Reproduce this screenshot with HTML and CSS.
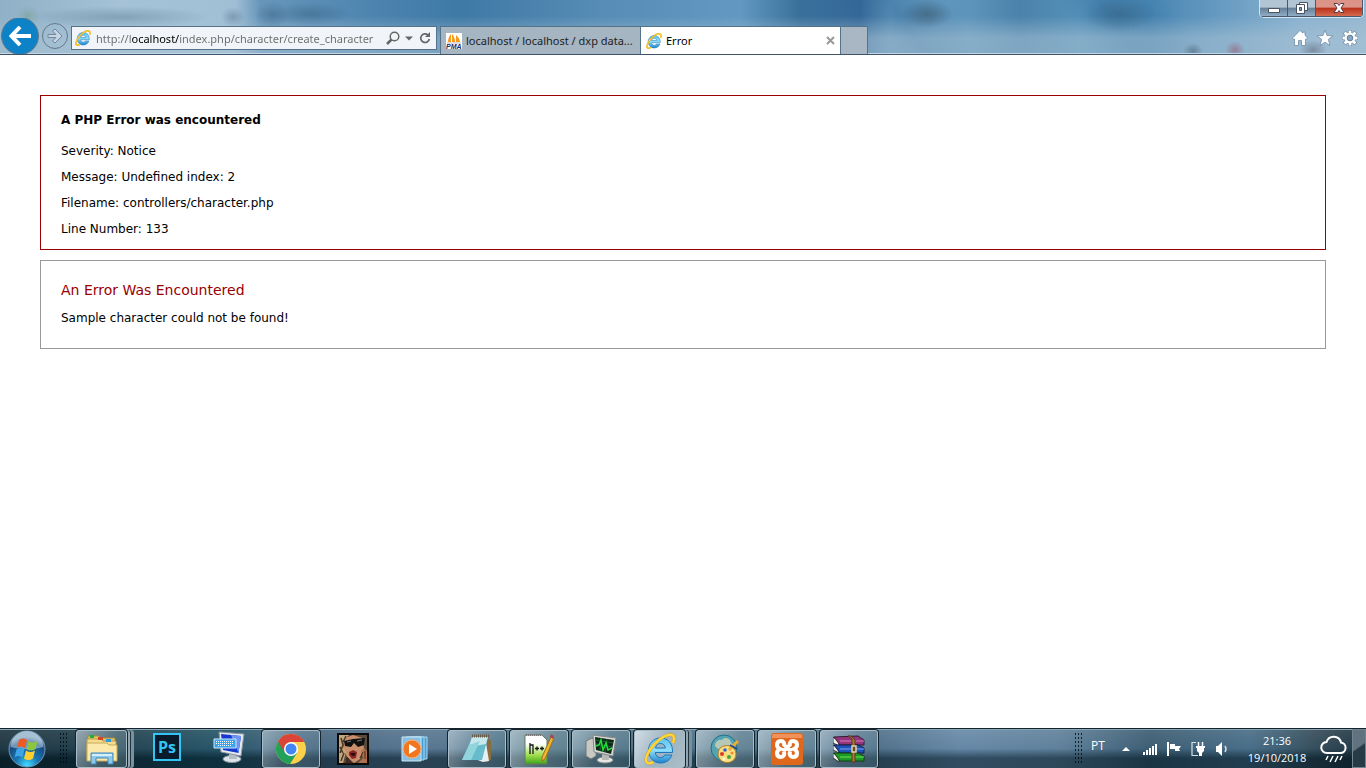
FILE: index.html
```
<!DOCTYPE html>
<html lang="en">
<head>
  <meta charset="UTF-8">
  <meta name="viewport" content="width=device-width, initial-scale=1.0">
  <title>Error</title>
  <link rel="stylesheet" href="styles.css">
</head>
<body>

  <!-- Shared icons -->
  <svg class="icon-defs" aria-hidden="true">
    <defs>
      <linearGradient id="ieBlue" x1="0" y1="0" x2="0" y2="1">
        <stop offset="0" stop-color="#5cc3f0"/>
        <stop offset="0.5" stop-color="#8ddcf8"/>
        <stop offset="1" stop-color="#1c82cc"/>
      </linearGradient>
    </defs>
    <symbol id="ie" viewBox="0 0 32 32">
      <path d="M16.500 5C9.500 5 4.500 10.500 4.500 17.500S9.500 30 16.500 30c5.500 0 9.800-3 11.300-8h-7c-.9 1.700-2.300 2.500-4.300 2.500-3 0-5-1.900-5.200-5h17.200C29 11 24.500 5 16.500 5zm-5 10c.5-2.800 2.400-4.500 5-4.500s4.500 1.700 4.900 4.500z" fill="url(#ieBlue)" stroke="#1b77bb" stroke-width="1"/>
      <path d="M29 10c1.500-4 1.500-7-1-8-4-1.500-12 3-18 9.500S.500 26 2.500 29c1.200 1.800 4 1.500 7 0" fill="none" stroke="#e2a314" stroke-width="3"/>
      <path d="M29 10c1.500-4 1.500-7-1-8-4-1.500-12 3-18 9.500S.500 26 2.500 29c1.200 1.800 4 1.500 7 0" fill="none" stroke="#ffd83a" stroke-width="2"/>
    </symbol>
  </svg>

  <!-- Browser chrome -->
  <header class="browser-bar">
    <div class="nav-buttons">
      <button class="back" aria-label="Back">
        <svg width="22" height="20" viewBox="0 0 22 20"><path d="M11 1L2.500 10l8.500 9M3 10h19" fill="none" stroke="#fff" stroke-width="4"/></svg>
      </button>
      <button class="forward" aria-label="Forward">
        <svg width="18" height="18" viewBox="0 0 18 18"><path d="M2 7.500h8L6.500 4 9 2l7 7-7 7-2.500-2 3.500-3.500H2z" fill="#c5d6e6" stroke="#75889b"/></svg>
      </button>
    </div>

    <form class="address-bar">
      <svg width="16" height="16"><use href="#ie"/></svg>
      <input type="text" aria-label="Address" value="http://localhost/index.php/character/create_character">
      <button type="button" aria-label="Search">
        <svg width="14" height="14" viewBox="0 0 14 14"><circle cx="8.500" cy="5.500" r="4.300" fill="none" stroke="#666" stroke-width="1.500"/><path d="M5.500 8.500L1 13" stroke="#666" stroke-width="2.500"/></svg>
      </button>
      <button type="button" aria-label="Show history">
        <svg width="8" height="14" viewBox="0 0 8 14"><path d="M0 5.500h8L4 9.500z" fill="#666"/></svg>
      </button>
      <button type="button" aria-label="Refresh">
        <svg width="14" height="14" viewBox="0 0 14 14"><path d="M10 4A4.300 4.300 0 1 0 11.300 8" fill="none" stroke="#666" stroke-width="1.700"/><path d="M12 1v5H7z" fill="#666"/></svg>
      </button>
    </form>

    <nav class="tabs">
      <a class="tab" href="#">
        <svg width="16" height="16" viewBox="0 0 16 16"><path fill="#fff" d="M0 0h16v16H0z"/><path d="M5 1v8H2c0-3 1-6 3-8zM6 1c2 2 3 5 3 8H6zM10 2c2 2 4 4 4 7h-4z" fill="#f79a1c"/><path d="M1 10h14" stroke="#b8b8c8"/><text x="0" y="16" class="pma-label">PMA</text></svg>
        <span>localhost / localhost / dxp data...</span>
      </a>
      <div class="tab active">
        <svg width="16" height="16"><use href="#ie"/></svg>
        <span>Error</span>
        <button aria-label="Close tab"><svg width="9" height="9" viewBox="0 0 9 9"><path d="M1 1l7 7M8 1L1 8" stroke="#999" stroke-width="2"/></svg></button>
      </div>
      <button class="new-tab" aria-label="New tab"></button>
    </nav>

    <div class="bar-right">
      <div class="window-controls">
        <button aria-label="Minimize"><svg width="14" height="14" viewBox="0 0 14 14"><path d="M1.500 7.500h11v4h-11z" fill="#fff" stroke="#4a5360"/></svg></button>
        <button aria-label="Restore"><svg width="14" height="14" viewBox="0 0 14 14"><path d="M4.500 1.500h8v8h-8z" fill="#fff" stroke="#4a5360"/><path d="M1.500 3.500h8v9h-8z" fill="#fff" stroke="#4a5360"/><path d="M4.500 6.500h2v3h-2z" fill="#7ea0bb" stroke="#4a5360"/></svg></button>
        <button class="close" aria-label="Close"><svg width="14" height="14" viewBox="0 0 14 14"><path d="M2 2.500h3.500L7 4.500l1.500-2H12L9 7l3 4.500H8.500L7 9.500l-1.500 2H2L5 7z" fill="#fff" stroke="#5b3a42"/></svg></button>
      </div>
      <div class="tools">
        <button aria-label="Home"><svg width="16" height="16" viewBox="0 0 16 16"><path d="M8 .500L.500 8l1 1.500 1-.5v6.500h4v-5h3v5h4V9l1 .5 1-1.500L13 5V2h-2v1z" fill="#fff" stroke="#66819b" stroke-width="0.700"/></svg></button>
        <button aria-label="Favorites"><svg width="16" height="16" viewBox="0 0 16 16"><path d="M8 0l2 5.600 6 .2-4.700 3.600 1.700 6.100L8 12.200l-5 3.300 1.700-6.100L0 5.800l6-.2z" fill="#fff" stroke="#66819b" stroke-width="0.700"/></svg></button>
        <button aria-label="Tools"><svg width="16" height="16" viewBox="0 0 16 16"><path d="M8 0v16M0 8h16M2.200 2.200l11.600 11.600M13.800 2.200L2.200 13.800" stroke="#66819b" stroke-width="4"/><path d="M8 .500v15M.500 8h15M2.600 2.600l10.800 10.800M13.400 2.600L2.600 13.400" stroke="#fff" stroke-width="2.800"/><circle cx="8" cy="8" r="4.200" fill="#86a8c4" stroke="#fff" stroke-width="2.200"/><circle cx="8" cy="8" r="2.800" fill="#86a8c4" stroke="#66819b"/></svg></button>
      </div>
    </div>
  </header>

  <!-- Page content -->
  <main>
    <section class="php-error">
      <h4>A PHP Error was encountered</h4>
      <p>Severity: Notice</p>
      <p>Message: Undefined index: 2</p>
      <p>Filename: controllers/character.php</p>
      <p>Line Number: 133</p>
    </section>

    <section class="content">
      <h1>An Error Was Encountered</h1>
      <p>Sample character could not be found!</p>
    </section>
  </main>

  <!-- Taskbar -->
  <footer class="taskbar">
    <button class="start" aria-label="Start">
      <svg width="38" height="38" viewBox="0 0 38 38">
        <defs>
          <radialGradient id="orb" cx="0.5" cy="0.95" r="0.8">
            <stop offset="0" stop-color="#45dcff"/>
            <stop offset="0.400" stop-color="#1976b4"/>
            <stop offset="0.800" stop-color="#174b80"/>
            <stop offset="1" stop-color="#7f9db8"/>
          </radialGradient>
        </defs>
        <circle cx="19" cy="19" r="18" fill="url(#orb)" stroke="#6f95b5" stroke-width="1"/>
        <path d="M3 17a16 16 0 0 1 32 0c-10 3-22 3-32 0z" fill="#dcecf7" opacity="0.450"/>
        <path d="M11 10c3-2 5-2 8 0l-2 8c-3-2-5-2-8 0z" fill="#ee5a24"/>
        <path d="M20.500 11c3 2 6 2 9 0l-2 8c-3 2-6 2-9 0z" fill="#8cc63f"/>
        <path d="M8.500 19.500c3-2 5-2 8 0l-2 8c-3-2-5-2-8 0z" fill="#3da4e8"/>
        <path d="M18 20.500c3 2 6 2 9 0l-2 8c-3 2-6 2-9 0z" fill="#ffcf2e"/>
      </svg>
    </button>
    <span class="grip"></span>

    <div class="apps">
      <button class="app open stacked light" aria-label="Windows Explorer">
        <svg width="34" height="32" viewBox="0 0 34 32">
          <path d="M3 3h11l2 2h14v21H3z" fill="#e9c766" stroke="#a98a3d"/>
          <path d="M2 6h14l2 2h13v19H2z" fill="#f6dc8c" stroke="#b8974a"/>
          <path d="M2 10h20l2 2h8v16H2z" fill="#fbe9ac" stroke="#c7a85b"/>
          <path d="M5 2h4v3H5z" fill="#20b038"/><path d="M13 4h5v3h-5z" fill="#d64527"/><path d="M21 6h5v3h-5z" fill="#2b9be0"/>
          <path d="M6 31V20h22v11h-5v-6H11v6z" fill="#8cc9ec" stroke="#3f87b8"/>
          <path d="M7 21h20v2H7z" fill="#d5effb"/>
        </svg>
      </button>
      <button class="app" aria-label="Photoshop">
        <svg class="raised" width="28" height="28" viewBox="0 0 28 28"><path d="M1 1h26v26H1z" fill="#0a1c2b" stroke="#31c5f4" stroke-width="2"/><text x="5" y="20" class="ps-label">Ps</text></svg>
      </button>
      <button class="app" aria-label="On-screen keyboard">
        <svg class="raised" width="32" height="32" viewBox="0 0 32 32">
          <ellipse cx="19" cy="28" rx="9" ry="3.500" fill="#dfe4e9" stroke="#8c98a3"/>
          <path d="M16 22l7 1 1 5h-8z" fill="#b5bec7"/>
          <path d="M6 1l25 2-3 22-20-4z" fill="#e6e9ee" stroke="#8894a0"/>
          <path d="M8 3l20 2-2.500 17L10 19z" fill="#1537d2"/><path d="M18 4l10 1-2.500 17z" fill="#6d93f3"/>
          <path d="M1 8h22v9H1z" fill="#3ba5ea" stroke="#d2e9f8"/>
          <path d="M3 10.500h18M3 12.500h18M5 14.500h14" stroke="#fff" stroke-dasharray="1 1"/>
        </svg>
      </button>
      <button class="app open" aria-label="Google Chrome">
        <svg width="30" height="30" viewBox="0 0 30 30">
          <circle cx="15" cy="15" r="15" fill="#fbd14b"/>
          <path d="M15 15L2 7.500A15 15 0 0 0 14 30l7-11z" fill="#23a15a"/>
          <path d="M2 7.500A15 15 0 0 1 28.200 8H15l-6.500 10z" fill="#db4437"/>
          <circle cx="15" cy="15" r="7" fill="#fff"/><circle cx="15" cy="15" r="5.500" fill="#4285f4"/>
        </svg>
      </button>
      <button class="app" aria-label="GTA San Andreas">
        <svg width="32" height="32" viewBox="0 0 32 32">
          <path d="M0 0h32v32H0z" fill="#0c0a09"/>
          <path d="M2 2h28v28H2z" fill="#5a4a3c"/>
          <path d="M8 5l8-3 9 3 2 10-4 11-6 4-7-6-4-9z" fill="#c98f6c"/>
          <path d="M2 2h10L7 7l-1 7 3 5-3 11H2z" fill="#c0a87c"/>
          <path d="M4 5l2 7-3 8M9 3L6 9M7 20l-3 8M3 14l3 6" fill="none" stroke="#4c3828" stroke-width="1.500"/>
          <path d="M7 8l9-2 12-1-1 7-6 2-4-4-3 4-6-1z" fill="#111"/>
          <path d="M10 9l4-1M20 8l5-1" stroke="#777"/>
          <path d="M12 19l4-2 4 2-1 6-4 1-3-4z" fill="#8c2525"/><path d="M13.500 20h5l-1 3-3-.5z" fill="#2a0c0d"/>
          <path d="M24 18l3-3 3 3v12h-9l5-5z" fill="#b06f4c"/><path d="M23 25l3-6M28 18v8M10 24l5 6H9z" stroke="#402820" fill="#402820"/>
        </svg>
      </button>
      <button class="app" aria-label="Media Player">
        <svg width="28" height="26" viewBox="0 0 28 26">
          <path d="M8 1h18v22H8z" fill="#4a9ed4" stroke="#a9daf2"/><path d="M5 1h18v23H5z" fill="#4a9ed4" stroke="#a9daf2"/><path d="M1 1h19v24H1z" fill="#89bfe0" stroke="#c9e8f7"/>
          <circle cx="11" cy="13" r="9" fill="#f0761f" stroke="#f9b27a"/><path d="M8 8l8 5-8 5z" fill="#fff"/>
        </svg>
      </button>
      <button class="app open" aria-label="Notepad">
        <svg width="32" height="32" viewBox="0 0 32 32">
          <path d="M26 4l4 4v19l-5 2z" fill="#876d40"/><path d="M24 4l4 24-6 1-8-3z" fill="#e7eef2"/>
          <path d="M11 4h16l-6 23H1z" fill="#67bccb"/><path d="M11 4h16l-2 7-17 3z" fill="#c7e9ed"/><path d="M8 12l11-4-9 19H1z" fill="#91d4dc"/>
          <path d="M11 3h17" stroke="#685c49" stroke-width="3" stroke-dasharray="1 1"/>
        </svg>
      </button>
      <button class="app open light" aria-label="Notepad++">
        <svg width="32" height="32" viewBox="0 0 32 32">
          <defs><linearGradient id="npp" x1="0" y1="0" x2="0" y2="1"><stop offset="0.300" stop-color="#fff"/><stop offset="0.700" stop-color="#9edc4b"/><stop offset="1" stop-color="#3ea51a"/></linearGradient></defs>
          <path d="M2 2h17l5 5v24H2z" fill="url(#npp)" stroke="#657a5d"/>
          <path d="M3 2h16" stroke="#777" stroke-width="2" stroke-dasharray="1 1"/>
          <path d="M7 21V10M7 12h3v9M12 15.500h4M14 13.500v4M17 15.500h4M19 13.500v4" fill="none" stroke="#161616" stroke-width="1.300"/>
          <path d="M28 4l3 1-9 21-3 2v-4z" fill="#f1b52d" stroke="#9d701d"/><path d="M28 1l3 2-1 3-3-2z" fill="#a6474d"/>
        </svg>
      </button>
      <button class="app open" aria-label="Task Manager">
        <svg width="32" height="30" viewBox="0 0 32 30">
          <path d="M1 7l6-3 4 2v16l-5 3-5-3z" fill="#c7c9c5" stroke="#777"/>
          <ellipse cx="20" cy="26" rx="8" ry="3" fill="#e5e7e4" stroke="#8a8e8c"/><path d="M17 20l7 1v5h-7z" fill="#b6bab7"/>
          <path d="M8 1l23 3-3 18-19-4z" fill="#d5d8d4" stroke="#858985"/><path d="M10 3l19 3-3 14-15-4z" fill="#102917"/>
          <path d="M11 6l17 3M11 10l16 3M16 4l-1 13M22 5l-2 13" stroke="#17632c"/>
          <path d="M11 12l3-1 2-5 2 10 3-7 2 7 4-2" fill="none" stroke="#22e03c" stroke-width="1.500"/>
        </svg>
      </button>
      <button class="app open stacked current" aria-label="Internet Explorer">
        <svg width="32" height="32"><use href="#ie"/></svg>
      </button>
      <button class="app open light" aria-label="Paint">
        <svg width="30" height="32" viewBox="0 0 30 32">
          <circle cx="14" cy="15" r="13" fill="#55a2b1" stroke="#1b728b"/><path d="M5 13c0-5 4-7 7-6 3-4 9-1 9 3 3 1 2 6-2 6H8z" fill="#b6c9b9"/>
          <path d="M10 15c6-5 16-2 16 6 0 7-7 10-12 8-7-2-7-10-4-14z" fill="#f8dd82" stroke="#a87b27"/>
          <circle cx="12" cy="21" r="2" fill="#d93c2a"/><circle cx="15" cy="17" r="1.800" fill="#345fca"/><circle cx="19" cy="24" r="2" fill="#41a83c"/><circle cx="22" cy="20" r="1.500" fill="#f48c27"/><circle cx="14" cy="26" r="1.700" fill="#fff5cb"/>
          <path d="M19 17l9-9" stroke="#efad30" stroke-width="3"/><path d="M20 12l7 4" stroke="#214c91" stroke-width="2"/>
        </svg>
      </button>
      <button class="app open light" aria-label="XAMPP">
        <svg width="32" height="32" viewBox="0 0 32 32">
          <rect width="32" height="32" rx="3" fill="#e0681d"/><path d="M1 3q0-2 2-2h26q2 0 2 2v2H1z" fill="#f0925a"/>
          <path d="M13 13.500C14 10 12.500 8 10 8c-3 0-4 2-4 4s1 3 3 4c-2 1-3 2-3 4s1 4 4 4c2.500 0 4-2 3-5.500M19 13.500C18 10 19.500 8 22 8c3 0 4 2 4 4s-1 3-3 4c2 1 3 2 3 4s-1 4-4 4c-2.500 0-4-2-3-5.500" fill="none" stroke="#fff" stroke-width="4"/>
          <path d="M11 16.500c2 1 3.500-.5 5-.5s3 1.500 5 .5M13 12c1 2 5 2 6 0" fill="none" stroke="#fff" stroke-width="3.500"/>
        </svg>
      </button>
      <button class="app open" aria-label="WinRAR">
        <svg width="32" height="28" viewBox="0 0 32 28">
          <path d="M0 2l6 4v5L0 8zM0 10l6 3v5l-6-3zM0 18l6 3v6l-6-4z" fill="#f0eee5" stroke="#303036"/>
          <path d="M1 2l24-1 6 4v5H7z" fill="#95357d" stroke="#351b35"/><path d="M7 6h24" stroke="#cd82b8"/>
          <path d="M1 10h24l6 3v5H7z" fill="#2053b9" stroke="#101f4a"/><path d="M7 14h24" stroke="#74a7f1"/>
          <path d="M1 18h24l6 3v5H7z" fill="#1d9a25" stroke="#103d14"/><path d="M7 22h24" stroke="#71df55"/>
          <path d="M15 1l4 3v23h3V5l-4-4z" fill="#a97836" stroke="#583a1a"/><path d="M19 11h4v6h-4z" fill="#6d4a22" stroke="#e2d5a4" stroke-width="1.500"/>
        </svg>
      </button>
    </div>

    <div class="tray">
      <span class="grip"></span>
      <button class="language">PT</button>
      <button class="tray-icon" aria-label="Show hidden icons"><svg width="8" height="8" viewBox="0 0 8 8"><path d="M0 6l4-4 4 4z" fill="#fff"/></svg></button>
      <button class="tray-icon" aria-label="Network"><svg width="16" height="16" viewBox="0 0 16 16"><path d="M2 11v3M5 9v5M8 7v7M11 5v9M14 3v11" stroke="#fff" stroke-width="2"/></svg></button>
      <button class="tray-icon" aria-label="Action Center"><svg width="16" height="16" viewBox="0 0 16 16"><path d="M2 1v14" stroke="#fff" stroke-width="2"/><path d="M4 3h5v2h6l-2 3 1 2H9V8H4z" fill="#fff"/></svg></button>
      <button class="tray-icon" aria-label="Power"><svg width="16" height="16" viewBox="0 0 16 16"><path d="M6 1.500H2v13h6" fill="none" stroke="#d8dfe3" stroke-width="1.200"/><path d="M8.500 1v4M12.500 1v4" stroke="#fff" stroke-width="1.500"/><path d="M6 5h9v2h-1v3l-2 2v3H9v-3l-2-2V7H6z" fill="#fff"/></svg></button>
      <button class="tray-icon" aria-label="Volume"><svg width="16" height="16" viewBox="0 0 16 16"><path d="M2 5h2l4-4v14l-4-4H2z" fill="#fff"/><path d="M11 5q2 3 0 6" fill="none" stroke="#d4dde3" stroke-width="1.500"/></svg></button>
      <button class="clock"><time>21:36</time><span>19/10/2018</span></button>
      <button class="weather" aria-label="Weather"><svg width="28" height="28" viewBox="0 0 28 28"><path d="M7 18a5.500 5.500 0 0 1-.5-11A7.500 7.500 0 0 1 21 7.500 5.300 5.300 0 0 1 21 18z" fill="none" stroke="#fff" stroke-width="2"/><path d="M8 21l-2 4M13 21l-3 6M18 21l-3 6M22 21l-2 4" stroke="#fff" stroke-width="1.500"/></svg></button>
      <button class="show-desktop" aria-label="Show desktop"></button>
    </div>
  </footer>

</body>
</html>
```
FILE: styles.css
```
/* General Reset */
* {
  margin: 0;
  padding: 0;
  box-sizing: border-box;
}

body {
  min-height: 100vh;
  display: flex;
  flex-direction: column;
  background-color: #fff;
  color: #000;
  font-family: Verdana, "DejaVu Sans", sans-serif;
  font-size: 12px;
}

button,
input {
  border: none;
  background: none;
  font-family: "Segoe UI", "Open Sans", sans-serif;
  font-size: 12px;
}

svg {
  display: block;
  flex: none;
}

.icon-defs {
  position: absolute;
  width: 0;
  height: 0;
}

/* Browser bar */
.browser-bar {
  height: 55px;
  display: flex;
  align-items: flex-end;
  border-bottom: 1px solid #3f5468;
  box-shadow: inset 0 -1px #c3d6e6;
  background:
    radial-gradient(ellipse 12px 10px at 28px 16px, rgba(100, 150, 110, 0.35), transparent),
    radial-gradient(ellipse 90px 11px at 120px 17px, rgba(70, 100, 125, 0.35), transparent),
    radial-gradient(ellipse 12px 10px at 233px 17px, rgba(60, 90, 115, 0.35), transparent),
    radial-gradient(ellipse 17px 14px at 272px 15px, rgba(40, 80, 110, 0.35), transparent),
    radial-gradient(ellipse 40px 12px at 310px 14px, rgba(40, 80, 110, 0.35), transparent),
    radial-gradient(ellipse 26px 14px at 927px 14px, rgba(60, 90, 110, 0.6), transparent),
    radial-gradient(ellipse 36px 18px at 1120px 14px, rgba(50, 90, 120, 0.45), transparent),
    radial-gradient(ellipse 10px 8px at 1193px 51px, rgba(70, 90, 110, 0.5), transparent),
    radial-gradient(ellipse 10px 9px at 1235px 50px, rgba(150, 80, 100, 0.5), transparent),
    radial-gradient(ellipse 14px 10px at 1313px 50px, rgba(90, 95, 115, 0.5), transparent),
    linear-gradient(transparent 16px, rgba(170, 195, 212, 0.55) 38px),
    linear-gradient(55deg, transparent 62%, rgba(35, 90, 140, 0.35) 66%, transparent 70%, transparent 78%, rgba(40, 100, 150, 0.35) 81%, transparent 86%),
    linear-gradient(90deg, #8fb0c6 0, #a5c2d7 120px, #a0bfd5 235px, #6796bb 260px, #4b83ae 380px, #3e79a5 460px, #568cb5 600px, #6298c1 740px, #39709a 800px, #36699a 860px, #6298be 890px, #5d94bb 970px, #4a82ab 1020px, #5591b9 1080px, #4886b3 1150px, #8ab2d0 1300px, #96b8d0 100%);
}

.nav-buttons {
  width: 71px;
  height: 36px;
  display: flex;
  align-items: center;
  gap: 3px;
  padding-left: 1px;
  overflow: hidden;
  flex: none;
}

.nav-buttons button {
  display: flex;
  align-items: center;
  justify-content: center;
  border-radius: 50%;
  border: 1px solid #66788b;
  flex: none;
}

.back {
  width: 38px;
  height: 38px;
  background-color: #0e82c6;
}

.forward {
  width: 26px;
  height: 26px;
}

.address-bar {
  flex: 0 1 366px;
  height: 24px;
  display: flex;
  align-items: center;
  gap: 5px;
  margin: 0 3px 4px 0;
  padding: 0 4px 0 3px;
  border: 1px solid #54738b;
  background-color: #f1f5f9;
}

/* Host name is darker than the rest of the URL */
.address-bar input {
  flex: 1;
  min-width: 0;
  height: 20px;
  font-family: "Segoe UI", "Noto Sans", sans-serif;
  font-size: 11px;
  color: transparent;
  background: linear-gradient(90deg, #6b6b6b 35px, #000 35px, #000 84px, #6b6b6b 84px);
  background-clip: text;
  -webkit-background-clip: text;
}

/* Tabs */
.tabs {
  flex: 0 1 428px;
  min-width: 0;
  height: 28px;
  display: flex;
  border: 1px solid #54738b;
  border-bottom: none;
}

.tab {
  flex: 1 1 200px;
  min-width: 0;
  display: flex;
  align-items: center;
  gap: 4px;
  padding: 0 5px;
  background-color: #a5b5c2;
  border-right: 1px solid #54738b;
  color: #222;
  font-family: "Segoe UI", "Noto Sans", sans-serif;
  font-size: 11px;
  text-decoration: none;
  white-space: nowrap;
}

.tab.active {
  background-color: #fff;
  color: #000;
}

.tab button {
  margin-left: auto;
}

.new-tab {
  flex: 0 0 26px;
  background-color: #a8b7c3;
}

.pma-label {
  font: italic bold 7px "Liberation Sans", sans-serif;
  fill: #28285c;
}

/* Window controls and tools */
.bar-right {
  height: 54px;
  margin-left: auto;
  display: flex;
  flex-direction: column;
  justify-content: space-between;
  align-items: flex-end;
  padding: 0 2px 8px 0;
}

.window-controls {
  display: flex;
  border: 1px solid #d2e4f2;
  border-top: none;
  border-radius: 0 0 5px 5px;
  box-shadow: inset 0 0 0 1px #34495c;
  overflow: hidden;
}

.window-controls button {
  width: 28px;
  height: 17px;
  display: flex;
  align-items: center;
  justify-content: center;
  border: 1px solid #47596a;
  border-top: none;
  border-left: none;
  background: linear-gradient(#b2c5d5 45%, #667f97 50%, #8fadc5);
}

.window-controls .close {
  width: 47px;
  background: linear-gradient(#dc9488 45%, #b8301a 50%, #d66b4e);
}

.tools {
  display: flex;
  gap: 9px;
  padding-right: 6px;
}

/* Page content */
main {
  flex: 1;
  padding: 40px;
}

.php-error {
  border: 1px solid #900;
  padding: 0 20px 12px;
  margin-bottom: 10px;
}

.php-error h4 {
  font-size: 12px;
  line-height: 16px;
  margin: 16px 0 15px;
}

.php-error p {
  line-height: 16px;
  margin-top: 10px;
}

.content {
  border: 1px solid #999;
  padding: 20px 20px 22px;
}

.content h1 {
  font-weight: normal;
  font-size: 14px;
  line-height: 18px;
  color: #900;
  margin-bottom: 11px;
}

.content p {
  line-height: 16px;
}

/* Taskbar */
.taskbar {
  height: 40px;
  display: flex;
  align-items: center;
  border-top: 1px solid #17232b;
  box-shadow: inset 0 1px #86a8b8;
  background:
    linear-gradient(rgba(255, 255, 255, 0.12), rgba(130, 165, 200, 0.1) 50%, rgba(0, 20, 30, 0.5) 75%),
    linear-gradient(90deg, #152c35 0, #1a3b48 130px, #1d4e60 220px, #416079 300px, #53718b 430px, #456b7b 520px, #4b6c85 880px, #6285a4 960px, #5a7c96 1060px, #35566b 1150px, #426882 1250px, #2b424d 1320px, #152a36 100%);
}

.start {
  margin: 0 12px 0 8px;
}

.grip {
  width: 9px;
  height: 32px;
  flex: none;
  background:
    conic-gradient(from 90deg at 2px 2px, transparent 75%, rgba(0, 8, 14, 0.8) 0) 0 0 / 3px 4px;
}

.apps {
  display: flex;
  gap: 4px;
  margin-left: 9px;
}

.app {
  width: 58px;
  height: 38px;
  display: flex;
  align-items: center;
  justify-content: center;
  border-radius: 3px;
}

.raised {
  margin-bottom: 4px;
}

.app.open {
  border: 1px solid #a9bdc8;
  box-shadow: 0 0 0 1px #14242e;
  background: linear-gradient(120deg, rgba(220, 232, 240, 0.5), rgba(160, 185, 200, 0.25) 50%, rgba(90, 130, 145, 0.3));
}

.app.light {
  background: linear-gradient(120deg, rgba(215, 228, 235, 0.6), rgba(145, 170, 180, 0.4) 60%, rgba(120, 155, 165, 0.35));
}

.app.current {
  background: linear-gradient(120deg, #d3dee5, #9eb2c0 50%, #a9bec7);
}

.app.stacked {
  width: 51px;
  margin-right: 7px;
  box-shadow: 0 0 0 1px #14242e, 3px 0 #90a5b0, 4px 0 #22343e, 7px 0 #7891a0;
}

/* Tray */
.tray {
  height: 100%;
  display: flex;
  align-items: center;
  margin-left: auto;
}

.tray button {
  color: #fff;
}

.language {
  width: 32px;
  padding-bottom: 6px;
}

.tray-icon {
  width: 24px;
  display: flex;
  justify-content: center;
}

.tray .clock {
  width: 86px;
  display: flex;
  flex-direction: column;
  align-items: center;
  font-size: 11px;
  line-height: 17px;
}

.weather {
  width: 30px;
}

.show-desktop {
  align-self: stretch;
  width: 14px;
  margin-left: 2px;
  border: 1px solid #718591;
  background: linear-gradient(145deg, #60737f 45%, #263b46 50%);
}

.ps-label {
  font: bold 16px "Open Sans", sans-serif;
  fill: #31c5f4;
}
```
